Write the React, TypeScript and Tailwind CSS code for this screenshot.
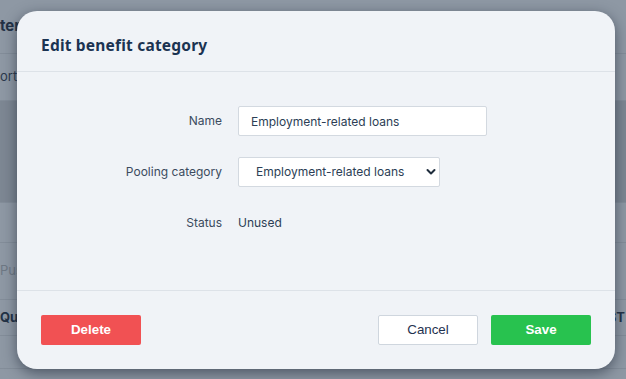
import { ReactNode } from "react";

// ─── Backdrop page (dimmed) ───────────────────────────────────

function BgRow({
  h,
  dark,
  children,
}: {
  h: string;
  dark?: boolean;
  children?: ReactNode;
}) {
  return (
    <div
      className={`${h} flex items-center justify-between border-b border-[#838d99] ${
        dark ? "bg-[#7d8793]" : "bg-[#8e98a4]"
      }`}
    >
      {children}
    </div>
  );
}

function Backdrop() {
  return (
    <div className="flex flex-col font-['Inter',sans-serif] text-[13px] text-[#233246]">
      <BgRow h="h-[54px]">
        <span className="font-bold text-[15px]">terms</span>
      </BgRow>
      <BgRow h="h-[47px]">
        <span className="text-[#2c3a4c]">orts</span>
      </BgRow>
      <BgRow h="h-[102px]" dark />
      <BgRow h="h-[40px]" />
      <BgRow h="h-[57px]">
        <span className="text-[#6e7884]">Push</span>
      </BgRow>
      <BgRow h="h-[36px]">
        <span className="font-bold">Quantity</span>
        <span className="pr-[1px] font-bold">ST</span>
      </BgRow>
      <BgRow h="h-[33px]" />
      <BgRow h="h-[20px]" />
    </div>
  );
}

// ─── Form row ─────────────────────────────────────────────────

function Field({ label, children }: { label: string; children: ReactNode }) {
  return (
    <div className="flex h-[30px] items-center gap-4">
      <div className="w-[181px] text-right text-[#3b4b5e]">{label}</div>
      {children}
    </div>
  );
}

// ─── Modal ────────────────────────────────────────────────────

function EditCategoryModal() {
  return (
    <div className="absolute left-[17px] top-[11px] flex w-[598px] h-[358px] flex-col rounded-[20px] bg-[#f0f3f7] shadow-[0_4px_14px_rgba(20,30,45,0.55)]">
      <div className="px-6 pt-6 pb-4 border-b border-[#dde2e8]">
        <h2 className="h-5 leading-5 text-[15.5px] tracking-[0.2px] font-bold text-[#1b3352] font-['Noto_Sans',sans-serif]">
          Edit benefit category
        </h2>
      </div>

      <div className="flex flex-1 flex-col gap-[21px] px-6 pt-[34px] font-['Inter',sans-serif] text-[12px]">
        <Field label="Name">
          <input
            defaultValue="Employment-related loans"
            className="h-[30px] w-[249px] rounded-[2px] border border-[#d3d9e0] bg-white px-3 text-[#2c3e55] outline-none"
          />
        </Field>
        <Field label="Pooling category">
          <div className="relative">
            <select
              defaultValue="loans"
              className="h-[30px] w-[202px] appearance-none rounded-[2px] border border-[#d3d9e0] bg-white pl-[17px] text-[#2c3e55] outline-none"
            >
              <option value="loans">Employment-related loans</option>
            </select>
            <svg
              className="pointer-events-none absolute right-[4px] top-[11px]"
              width="10"
              height="8"
              viewBox="0 0 10 8"
              fill="none"
            >
              <path
                d="M1.5 2L5 5.5L8.5 2"
                stroke="#1f2d3d"
                strokeWidth="2"
                strokeLinecap="round"
                strokeLinejoin="round"
              />
            </svg>
          </div>
        </Field>
        <Field label="Status">
          <span className="text-[#2c3e55]">Unused</span>
        </Field>
      </div>

      <div className="flex items-center justify-between border-t border-[#dde2e8] px-6 pt-6 pb-6 font-['Liberation_Sans',Arial,sans-serif] text-[13.33px]">
        <button className="h-[30px] w-[100px] rounded-[2px] bg-[#f15153] font-bold text-white">
          Delete
        </button>
        <div className="flex gap-[13px]">
          <button className="h-[30px] w-[100px] rounded-[2px] border border-[#cfd6de] bg-white text-[#1f3250]">
            Cancel
          </button>
          <button className="h-[30px] w-[100px] rounded-[2px] bg-[#28c24f] font-bold text-white">
            Save
          </button>
        </div>
      </div>
    </div>
  );
}

export default function App() {
  return (
    <div className="relative h-[379px] w-[626px] overflow-hidden">
      <Backdrop />
      <EditCategoryModal />
    </div>
  );
}
